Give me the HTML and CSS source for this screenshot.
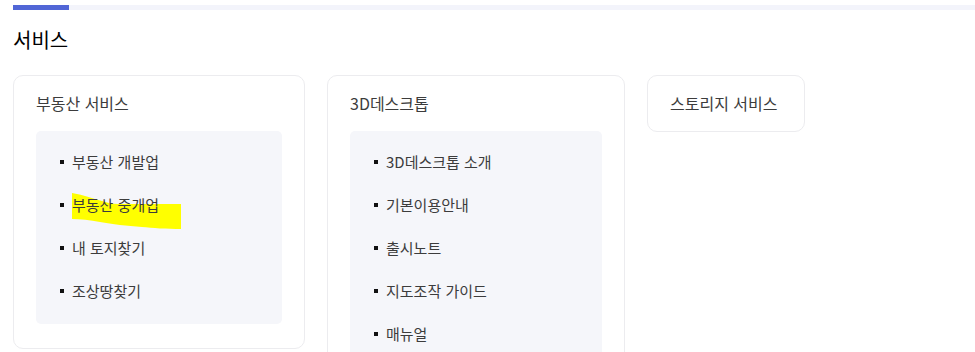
FILE: index.html
```html
<!DOCTYPE html>
<html lang="ko">
<head>
    <meta charset="UTF-8">
    <meta name="viewport" content="width=device-width, initial-scale=1.0">
    <title>서비스</title>
    <link rel="stylesheet" href="styles.css">
</head>
<body>
    <div class="tab-bar"><div class="tab-active"></div></div>

    <h2 class="section-title">서비스</h2>

    <div class="cards">
        <div class="card card-land">
            <div class="card-title">부동산 서비스</div>
            <ul class="menu">
                <li>부동산 개발업</li>
                <li class="marked">부동산 중개업
                    <svg class="marker" width="110" height="37" viewBox="0 0 110 37">
                        <path d="M0 0 C12 2 22 6 30 8 C36 10 40 11 46 11 L109 11 L109 36 C95 36 80 35 70 34 C55 33 40 31 28 29 C18 27 8 26 0 26 Z" fill="#ffff00"/>
                    </svg>
                </li>
                <li>내 토지찾기</li>
                <li>조상땅찾기</li>
            </ul>
        </div>

        <div class="card card-desktop">
            <div class="card-title">3D데스크톱</div>
            <ul class="menu">
                <li>3D데스크톱 소개</li>
                <li>기본이용안내</li>
                <li>출시노트</li>
                <li>지도조작 가이드</li>
                <li>매뉴얼</li>
            </ul>
        </div>

        <div class="card card-storage">
            <div class="card-title">스토리지 서비스</div>
        </div>
    </div>
</body>
</html>
```

FILE: styles.css
```css
body {
    font-family: "Noto Sans CJK KR", "Noto Sans", sans-serif;
    background-color: #fff;
    margin: 0;
    padding: 0 0 0 13px;
    color: #3c3c3c;
}
.tab-bar {
    margin-top: 5px;
    height: 5px;
    background-color: #f3f4fb;
}
.tab-active {
    width: 56px;
    height: 5px;
    background-color: #5166d6;
}
.section-title {
    margin: 16px 0 21px;
    font-size: 20px;
    line-height: 28px;
    font-weight: 400;
    color: #000;
}
.cards {
    display: flex;
    align-items: flex-start;
    gap: 22px;
}
.card {
    box-sizing: border-box;
    border: 1px solid #ececef;
    border-radius: 10px;
    padding: 17px 22px 0;
    background-color: #fff;
}
.card-land {
    width: 292px;
}
.card-desktop {
    width: 298px;
}
.card-storage {
    width: 158px;
}
.card-title {
    font-size: 16px;
    line-height: 21px;
    padding-bottom: 17px;
    color: #3c3c3c;
}
.menu {
    position: relative;
    z-index: 0;
    list-style: none;
    margin: 0 0 24px;
    padding: 9px 0 12px;
    background-color: #f5f6fa;
    border-radius: 5px;
}
.menu li {
    position: relative;
    padding-left: 36px;
    font-size: 15px;
    line-height: 43px;
    height: 43px;
    color: #3c3c3c;
}
.menu li::before {
    content: "";
    position: absolute;
    left: 24px;
    top: 20px;
    width: 4px;
    height: 4px;
    background-color: #111;
}
.marker {
    position: absolute;
    left: 36px;
    top: 10px;
    z-index: -1;
}
```
